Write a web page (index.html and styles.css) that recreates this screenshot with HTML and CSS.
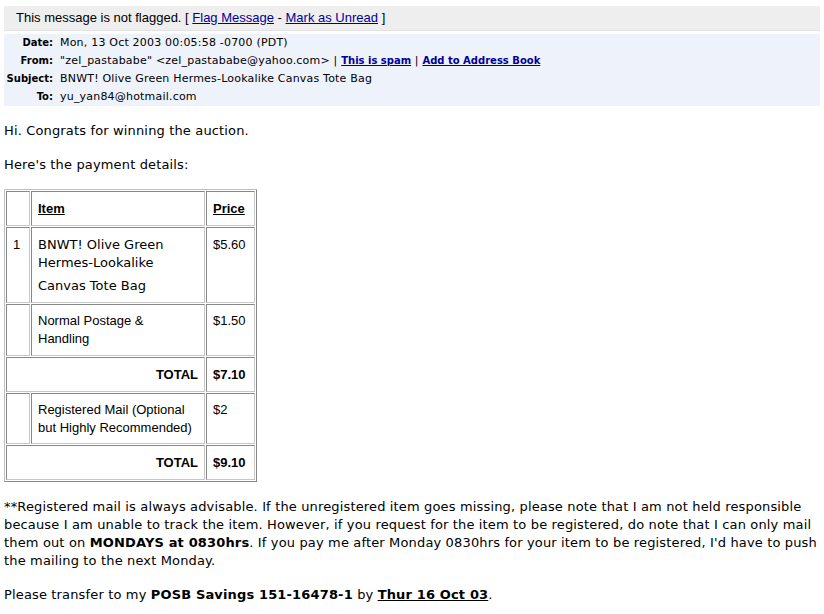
FILE: index.html
```html
<!DOCTYPE html>
<html>
<head>
<meta charset="utf-8">
<link rel="stylesheet" href="styles.css">
</head>
<body>
<div class="flagbar">This message is not flagged. [ <a href="#">Flag Message</a> - <a href="#">Mark as Unread</a> ]</div>
<div class="headers">
  <div class="hrow"><span class="lbl">Date:</span><span class="val">Mon, 13 Oct 2003 00:05:58 -0700 (PDT)</span></div>
  <div class="hrow"><span class="lbl">From:</span><span class="val">"zel_pastababe" &lt;zel_pastababe@yahoo.com&gt; | <a class="hlink" href="#">This is spam</a> | <a class="hlink" href="#">Add to Address Book</a></span></div>
  <div class="hrow"><span class="lbl">Subject:</span><span class="val">BNWT! Olive Green Hermes-Lookalike Canvas Tote Bag</span></div>
  <div class="hrow"><span class="lbl">To:</span><span class="val">yu_yan84@hotmail.com</span></div>
</div>
<div class="msg">
  <p class="para">Hi. Congrats for winning the auction.</p>
  <p class="para pre-table">Here's the payment details:</p>
  <table class="pay">
    <tr class="r-head">
      <td class="c1"></td>
      <td class="c2 th"><u>Item</u></td>
      <td class="c3 th"><u>Price</u></td>
    </tr>
    <tr class="r-item">
      <td class="c1 ar">1</td>
      <td class="c2 vd">BNWT! Olive Green Hermes-Lookalike<div class="sub">Canvas Tote Bag</div></td>
      <td class="c3 ar">$5.60</td>
    </tr>
    <tr class="r-post">
      <td class="c1"></td>
      <td class="c2 ar">Normal Postage &amp; Handling</td>
      <td class="c3 ar">$1.50</td>
    </tr>
    <tr class="r-total">
      <td class="tot" colspan="2">TOTAL</td>
      <td class="c3 th">$7.10</td>
    </tr>
    <tr class="r-post r-reg">
      <td class="c1"></td>
      <td class="c2 ar">Registered Mail (Optional but Highly Recommended)</td>
      <td class="c3 ar">$2</td>
    </tr>
    <tr class="r-total">
      <td class="tot" colspan="2">TOTAL</td>
      <td class="c3 th">$9.10</td>
    </tr>
  </table>
  <p class="para note">**Registered mail is always advisable. If the unregistered item goes missing, please note that I am not held responsible because I am unable to track the item. However, if you request for the item to be registered, do note that I can only mail them out on <b>MONDAYS at 0830hrs</b>. If you pay me after Monday 0830hrs for your item to be registered, I'd have to push the mailing to the next Monday.</p>
  <p class="para">Please transfer to my <b>POSB Savings 151-16478-1</b> by <b><u>Thur 16 Oct 03</u></b>.</p>
</div>
</body>
</html>
```
FILE: styles.css
```css
html, body {
  margin: 0;
  padding: 0;
  background: #ffffff;
}
body {
  padding: 6px 4px 0 4px;
  color: #000;
}
a {
  color: #0000cc;
}
.flagbar {
  background: #eeeeee;
  height: 24px;
  line-height: 24px;
  padding-left: 12px;
  font-family: "Liberation Sans", Arial, sans-serif;
  font-size: 13px;
  border-bottom: 1px solid #e2e2e2;
}
.flagbar a {
  color: #000099;
}
.headers {
  margin-top: 3px;
  background: #eef2fb;
  padding: 0;
  font-family: "DejaVu Sans", Verdana, sans-serif;
  font-size: 11px;
  letter-spacing: 0.2px;
}
.hrow {
  display: flex;
  height: 18px;
  line-height: 18px;
}
.lbl {
  width: 49px;
  text-align: right;
  font-weight: bold;
  font-size: 10px;
  padding-right: 7px;
  letter-spacing: 0;
}
.val {
  white-space: nowrap;
}
.hlink {
  font-weight: bold;
  font-size: 10px;
  color: #000099;
  letter-spacing: 0;
}
.msg {
  font-family: "DejaVu Sans", Verdana, sans-serif;
  font-size: 13px;
  letter-spacing: 0.15px;
  line-height: 18px;
}
.para {
  margin: 16px 0;
}
.para.pre-table {
  margin-bottom: 15px;
}
.pay {
  border-collapse: separate;
  border-spacing: 1px;
  border: 1px solid;
  border-color: #c0c0c0 #888888 #888888 #c0c0c0;
  margin: 0;
  letter-spacing: 0;
}
.pay td {
  border: 1px solid;
  border-color: #888888 #c8c8c8 #c8c8c8 #888888;
  padding: 0 6px;
  vertical-align: top;
  font-family: "Liberation Sans", Arial, sans-serif;
  font-size: 13px;
  line-height: 18px;
}
.pay .c1 {
  width: 10px;
}
.pay .c2 {
  width: 160px;
}
.pay .c3 {
  width: 35px;
}
.pay .th {
  font-weight: bold;
  vertical-align: middle;
}
.r-head td {
  height: 33px;
}
.r-item td {
  padding-top: 8px;
  height: 66px;
}
.pay .vd {
  font-family: "DejaVu Sans", Verdana, sans-serif;
  font-size: 13px;
  letter-spacing: 0;
}
.sub {
  margin-top: 5px;
}
.r-post td {
  padding-top: 7px;
  height: 43px;
}
.r-post.r-reg td {
  height: 42px;
}
.r-total td {
  height: 33px;
  vertical-align: middle;
}
.pay .tot {
  text-align: right;
  font-weight: bold;
}
```
